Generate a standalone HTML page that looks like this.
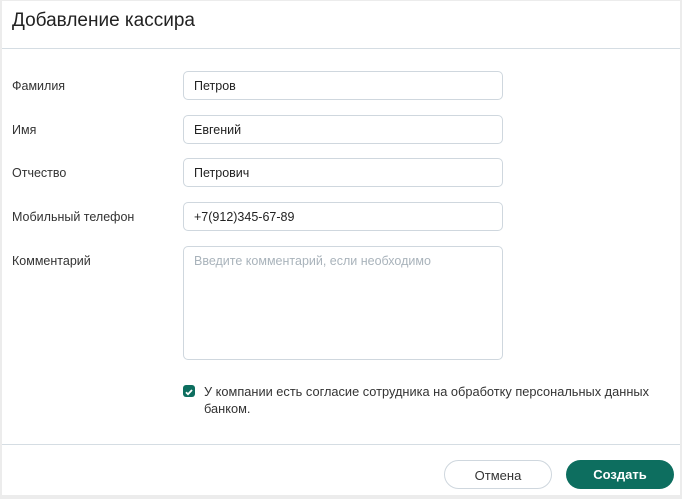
<!DOCTYPE html>
<html><head><meta charset="utf-8"><style>
html,body{margin:0;padding:0;background:#ececec;}
body{width:682px;height:499px;position:relative;font-family:"Liberation Sans","DejaVu Sans",sans-serif;overflow:hidden;}
.m{position:absolute;left:2px;top:1px;width:678px;height:494px;background:#fff;}
.t{position:absolute;left:10px;top:9px;font-size:19px;color:#222;}
.hr{position:absolute;left:0;width:678px;height:1px;background:#d5dde3;}
.l{position:absolute;left:10px;font-size:12.5px;color:#333;}
.i{position:absolute;left:181px;width:318px;height:27px;border:1px solid #cfd7de;border-radius:5px;font-size:12.5px;color:#222;box-sizing:content-box;}
.i span{position:absolute;left:10px;top:7px;}
.cb{position:absolute;left:181px;top:384px;width:12px;height:12px;background:#0d6e5f;border-radius:3px;}
.ct{position:absolute;left:202px;top:382px;font-size:12.8px;color:#333;line-height:17px;width:470px;}
.b{position:absolute;top:459px;height:29px;border-radius:15px;font-size:13px;text-align:center;line-height:29px;box-sizing:border-box;}
</style></head><body><div class="m">
<div class="t">Добавление кассира</div>
<div class="hr" style="top:47px"></div>
<div class="l" style="top:78px">Фамилия</div>
<div class="i" style="top:70px"><span>Петров</span></div>
<div class="l" style="top:122px">Имя</div>
<div class="i" style="top:114px"><span>Евгений</span></div>
<div class="l" style="top:165px">Отчество</div>
<div class="i" style="top:157px"><span>Петрович</span></div>
<div class="l" style="top:209px">Мобильный телефон</div>
<div class="i" style="top:201px"><span>+7(912)345-67-89</span></div>
<div class="l" style="top:253px">Комментарий</div>
<div class="i" style="top:245px;height:112px"><span style="color:#a9b3bb">Введите комментарий, если необходимо</span></div>
<div class="cb"><svg width="12" height="12" viewBox="0 0 12 12"><path d="M3 6.2l2 2 4-4.2" stroke="#fff" stroke-width="1.8" fill="none"/></svg></div>
<div class="ct">У компании есть согласие сотрудника на обработку персональных данных банком.</div>
<div class="hr" style="top:443px"></div>
<div class="b" style="left:442px;width:108px;border:1px solid #cfd7de;color:#333">Отмена</div>
<div class="b" style="left:564px;width:108px;background:#0d6e5f;color:#fff;font-weight:bold">Создать</div>
</div></body></html>
